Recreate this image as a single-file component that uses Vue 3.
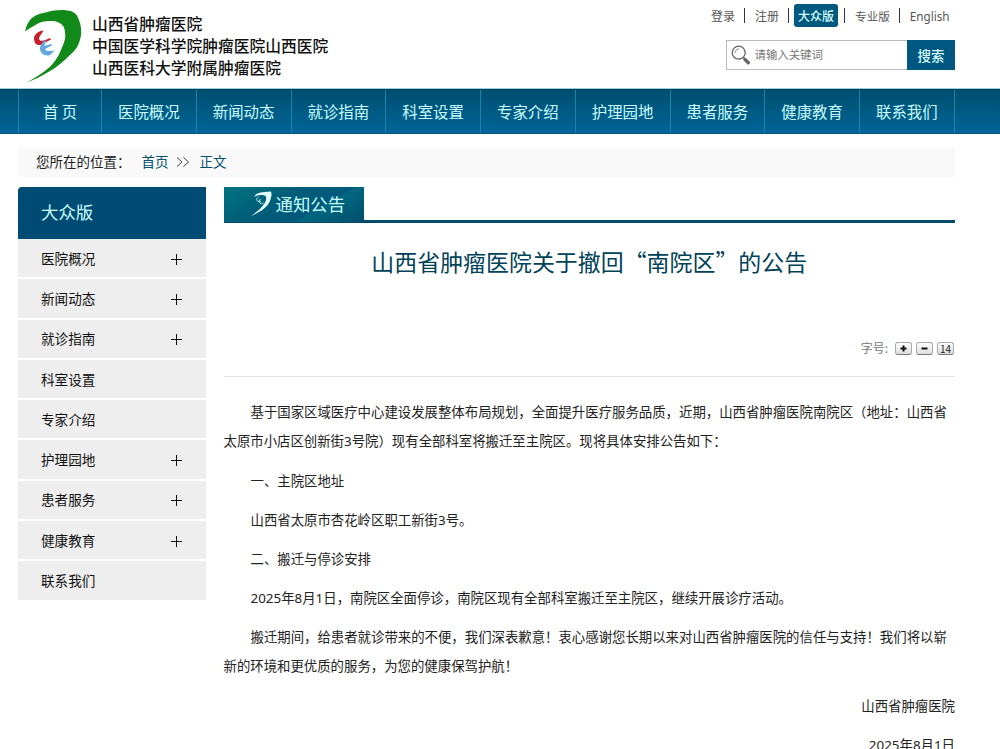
<script setup>
import { ref } from "vue";

const keyword = ref("");
const fontSize = ref(14);

const navItems = [
  "首 页",
  "医院概况",
  "新闻动态",
  "就诊指南",
  "科室设置",
  "专家介绍",
  "护理园地",
  "患者服务",
  "健康教育",
  "联系我们",
];

const sideItems = [
  { name: "医院概况", more: true },
  { name: "新闻动态", more: true },
  { name: "就诊指南", more: true },
  { name: "科室设置", more: false },
  { name: "专家介绍", more: false },
  { name: "护理园地", more: true },
  { name: "患者服务", more: true },
  { name: "健康教育", more: true },
  { name: "联系我们", more: false },
];

const paragraphs = [
  [
    "基于国家区域医疗中心建设发展整体布局规划，全面提升医疗服务品质，近期，山西省肿瘤医院南院区（地址：山西省",
    "太原市小店区创新街3号院）现有全部科室将搬迁至主院区。现将具体安排公告如下：",
  ],
  ["一、主院区地址"],
  ["山西省太原市杏花岭区职工新街3号。"],
  ["二、搬迁与停诊安排"],
  ["2025年8月1日，南院区全面停诊，南院区现有全部科室搬迁至主院区，继续开展诊疗活动。"],
  [
    "搬迁期间，给患者就诊带来的不便，我们深表歉意！衷心感谢您长期以来对山西省肿瘤医院的信任与支持！我们将以崭",
    "新的环境和更优质的服务，为您的健康保驾护航！",
  ],
];
</script>

<template>
  <div class="page" lang="zh-CN">
    <header class="header">
      <div class="brand">
        <svg class="logo" width="60" height="76" viewBox="0 0 60 76">
          <path
            d="M2 22.500C3 18 4.500 14 7 11C11 6 17 4.500 23.700 3.200C30 1.500 37 0.500 43.700 1.500C51 2 54 5 56 11C58 17 59 22 57.700 28C56 36 53 41 47 46C41 52 34 58 27 62C19 67 11 71 3.700 73.500C12 69 20 64 27 57.700C33 52 36 46 38.700 39.300C41 34 43 29 42 24C42 19 40 16 37 14.300C34 12 30 12 27 12C22 12 17 13 13.700 15.300C9 18 5 20 2 22.500Z"
            fill="#118a19"
          />
          <path
            d="M20.500 21.500C15 22 10.500 26 11 30C11.500 35 14 36.500 17.500 36L28 30.500L27 29C23 31 18 33 16.500 31C15 28 19 25 20.500 21.500Z"
            fill="#c5202b"
          />
          <path
            d="M22.500 30.500C18 34 16 39 17.500 42C19 46 24 47.500 27 46L32 41.500C28 42.500 23 42.500 22 40L29 36.500L28 35L21.500 37C22 34 23 33 22.500 30.500Z"
            fill="#63a7dd"
          />
        </svg>
        <div class="brand-names">
          <span>山西省肿瘤医院</span>
          <span>中国医学科学院肿瘤医院山西医院</span>
          <span>山西医科大学附属肿瘤医院</span>
        </div>
      </div>
      <div class="tools">
        <div class="links">
          <a>登录</a>
          <i></i>
          <a class="second">注册</a>
          <i></i>
          <a class="active">大众版</a>
          <i></i>
          <a class="pro">专业版</a>
          <i></i>
          <a class="english">English</a>
        </div>
        <form class="search" @submit.prevent>
          <svg width="20" height="21" viewBox="0 0 20 21" fill="none">
            <circle cx="7.7" cy="7.7" r="6.5" stroke="#666" stroke-width="1.3" />
            <path d="M4 8C4 5.500 5.500 4 8 4" stroke="#888" />
            <path d="M12.500 12.500L14 14" stroke="#666" stroke-width="1.5" />
            <path d="M14 14.500L17.300 17.800" stroke="#666" stroke-width="3.4" stroke-linecap="round" />
          </svg>
          <input v-model="keyword" type="text" placeholder="请输入关键词" />
          <button type="submit">搜索</button>
        </form>
      </div>
    </header>

    <nav class="nav">
      <a v-for="item in navItems" :key="item">{{ item }}</a>
    </nav>

    <div class="crumbs">
      <span>您所在的位置：</span>
      <a>首页</a>
      <svg width="14" height="10" viewBox="0 0 14 10" fill="none" stroke="#444">
        <path d="M1 0.500L6 5L1 9.500M7.500 0.500L12.500 5L7.500 9.500" />
      </svg>
      <a>正文</a>
    </div>

    <div class="main">
      <aside class="side">
        <h2>大众版</h2>
        <ul>
          <li v-for="item in sideItems" :key="item.name">
            <span>{{ item.name }}</span>
            <svg v-if="item.more" width="11" height="11" viewBox="0 0 11 11" stroke="#111">
              <path d="M5.500 0V11M0 5.500H11" />
            </svg>
          </li>
        </ul>
      </aside>

      <article class="content">
        <div class="section-head">
          <div class="tab">
            <svg width="22" height="26" viewBox="0 0 22 26">
              <path
                d="M3 6C5 2 9 1.500 13 1L20 0.500C21 3 20.500 6 19 10C16 17 9 21 0 25C7 20 13 15 15 9C16 5 14 4 11 4C8 4 5 4.500 3 6Z"
                fill="#e4ffff"
              />
              <path d="M7.500 6C4.500 8 5 11 10 10.500M9.500 8C7 11 9 14 12.500 12" fill="none" stroke="#b4eef4" />
            </svg>
            <span>通知公告</span>
          </div>
        </div>
        <h1>山西省肿瘤医院关于撤回“南院区”的公告</h1>
        <div class="font-tools">
          <span>字号:</span>
          <button type="button" @click="fontSize++">
            <svg width="7" height="7" viewBox="0 0 7 7" stroke="#111" stroke-width="2">
              <path d="M3.500 0.500V6.500M0.500 3.500H6.500" />
            </svg>
          </button>
          <button type="button" @click="fontSize--">
            <svg width="7" height="7" viewBox="0 0 7 7" stroke="#111" stroke-width="2">
              <path d="M0.500 3.500H6.500" />
            </svg>
          </button>
          <button type="button">{{ fontSize }}</button>
        </div>
        <div class="text">
          <p v-for="(lines, index) in paragraphs" :key="index">
            <span v-for="line in lines" :key="line">{{ line }}</span>
          </p>
          <p class="sign">山西省肿瘤医院</p>
          <p class="sign">2025年8月1日</p>
        </div>
      </article>
    </div>
  </div>
</template>

<style>
body {
  overflow: hidden;
  background: #fff;
}
</style>

<style scoped>
.page {
  height: 749px;
  overflow: hidden;
  font-family: "Noto Sans CJK SC", "Noto Sans", sans-serif;
  font-size: 13.4px;
  color: #222;
}
button,
input {
  font-family: inherit;
  padding: 0;
  border: 0;
}
.header {
  box-sizing: border-box;
  height: 89px;
  padding: 0 45px 0 23px;
  display: flex;
  justify-content: space-between;
  border-bottom: 1px solid #8fd5e6;
}
.brand {
  display: flex;
  padding-top: 9px;
}
.brand-names {
  display: flex;
  flex-direction: column;
  padding: 4px 0 0 9px;
  font-size: 15.75px;
  line-height: 22px;
  font-weight: 500;
  color: #111;
  white-space: nowrap;
}
.tools {
  display: flex;
  flex-direction: column;
  align-items: flex-end;
}
.links {
  display: flex;
  align-items: center;
  width: 244px;
  height: 23px;
  margin-top: 4px;
  font-size: 12px;
  color: #555;
  white-space: nowrap;
}
.links i {
  width: 1px;
  height: 15px;
  margin-left: 9px;
  background: #333;
}
.links .second {
  margin-left: 10px;
}
.links .active {
  box-sizing: border-box;
  width: 44px;
  height: 23px;
  margin-left: 5px;
  line-height: 23px;
  text-align: center;
  border-radius: 3px;
  background: #00587d;
  color: #d8ffff;
  font-weight: 500;
}
.links .active + i {
  margin-left: 6px;
}
.links .pro {
  margin-left: 10px;
  font-size: 11.6px;
}
.links .english {
  margin-left: 10px;
  font-family: "Noto Sans", sans-serif;
  font-size: 11.7px;
}
.search {
  box-sizing: border-box;
  display: flex;
  align-items: center;
  width: 229.500px;
  height: 30px;
  margin-top: 13px;
  padding-left: 4px;
  border: 1px solid #bbb;
  border-right: 0;
}
.search input {
  flex: 1;
  min-width: 0;
  height: 24px;
  margin: 0 0 2px 4px;
  font-size: 11.4px;
  outline: 0;
}
.search input::placeholder {
  color: #777;
}
.search button {
  width: 48px;
  height: 30px;
  flex: none;
  background: #00577f;
  color: #d8ffff;
  font-size: 13.4px;
  font-weight: 500;
}
.nav {
  box-sizing: border-box;
  display: flex;
  height: 45px;
  padding-left: 18px;
  background: linear-gradient(#004e70, #005a83 50%, #00659a);
  border-top: 1px solid #003c55;
  border-bottom: 1px solid #00547b;
}
.nav a {
  box-sizing: border-box;
  width: 94.75px;
  line-height: 42px;
  text-align: center;
  font-size: 15.4px;
  color: #c8ffff;
  border-right: 1px solid #1686a6;
}
.nav a:first-child {
  width: 84px;
  border-left: 1px solid #1686a6;
}
.crumbs {
  display: flex;
  align-items: center;
  width: 919px;
  height: 30px;
  margin: 13px 0 0 18px;
  padding-left: 18px;
  background: #f9f9f9;
  font-size: 13.5px;
  line-height: 28px;
}
.crumbs span,
.crumbs a {
  height: 30px;
}
.crumbs a {
  color: #00516a;
}
.crumbs > a:first-of-type {
  margin-left: 11px;
}
.crumbs svg {
  margin: 0 10px 0 7px;
}
.main {
  display: flex;
  gap: 18px;
  padding: 10px 45px 0 18px;
}
.side {
  width: 187.500px;
  flex: none;
}
.side h2 {
  height: 52px;
  margin: 0;
  padding-left: 23px;
  line-height: 50px;
  font-size: 17.4px;
  font-weight: 400;
  background: #004b73;
  color: #c8ffff;
  border-radius: 4px 0 0 0;
}
.side ul {
  margin: 0;
  padding: 0;
  list-style: none;
}
.side li {
  box-sizing: border-box;
  display: flex;
  align-items: center;
  justify-content: space-between;
  height: 40.3px;
  padding: 0 24px 0 23px;
  background: #eee;
  border-bottom: 2px solid #fff;
  font-size: 13.6px;
  color: #111;
}
.side li span {
  padding-bottom: 1px;
}
.side li svg {
  margin-top: 2px;
}
.content {
  flex: 1;
  min-width: 0;
}
.section-head {
  display: flex;
  height: 33px;
  border-bottom: 3px solid #004c68;
}
.tab {
  display: flex;
  align-items: center;
  box-sizing: border-box;
  width: 140px;
  height: 35px;
  padding: 0 0 2px 27px;
  background: linear-gradient(150deg, #007580 0%, #005e79 35%, #00587a 64%, #006680 67%, #004f6b 100%);
  color: #c8ffff;
  font-size: 17.4px;
}
.tab span {
  margin-left: 3px;
}
h1 {
  margin: 18px 0 0;
  line-height: 40px;
  text-align: center;
  font-size: 22.95px;
  font-weight: 400;
  color: #004258;
}
.font-tools {
  box-sizing: border-box;
  display: flex;
  justify-content: flex-end;
  height: 96px;
  padding: 59px 1px 0 0;
  border-bottom: 1px solid #e4e4e4;
  font-size: 12px;
  line-height: 16px;
  color: #777;
}
.font-tools span {
  margin-right: 3px;
}
.font-tools button {
  box-sizing: border-box;
  display: flex;
  align-items: center;
  justify-content: center;
  width: 17px;
  height: 13px;
  margin: 2px 0 0 4px;
  border: 1px solid #aaa;
  border-bottom-color: #777;
  border-radius: 3px;
  background: linear-gradient(#fff, #ddd);
  font-size: 10px;
  color: #222;
}
.text {
  padding-top: 21.4px;
  font-family: "Noto Sans", "Noto Sans CJK SC", sans-serif;
}
.text p {
  margin: 0 0 10.2px;
  line-height: 29px;
  font-size: 13.4px;
  text-indent: 27px;
}
.text p span {
  display: block;
  white-space: nowrap;
}
.text p span + span {
  text-indent: 0;
}
.text .sign {
  text-align: right;
  text-indent: 0;
}
</style>
